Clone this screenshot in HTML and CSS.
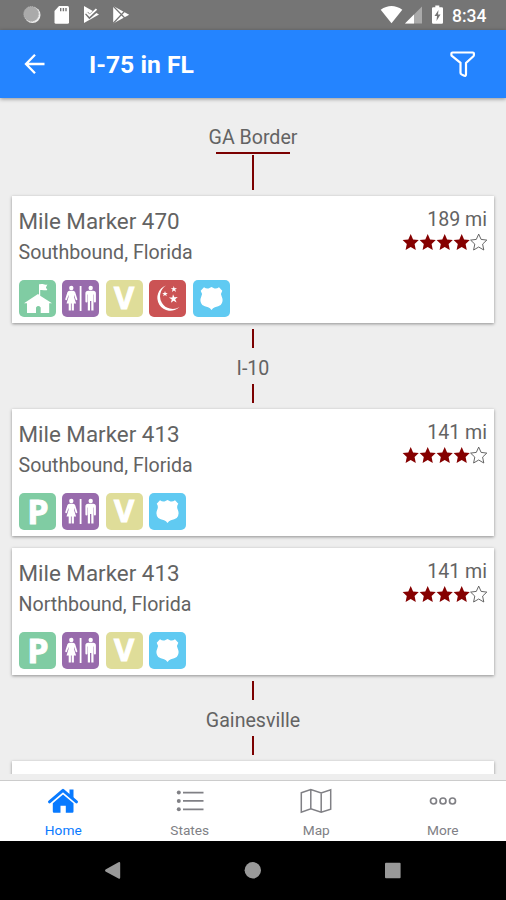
FILE: index.html
```html
<!DOCTYPE html>
<html lang="en">
<head>
<meta charset="utf-8">
<title>I-75 in FL</title>
<link rel="stylesheet" href="styles.css">
</head>
<body>
<svg class="defs" width="0" height="0">
  <symbol id="star" viewBox="0 0 17 17"><path d="M8.700 .1l2.400 5.300 5.700.7-4.200 4 1.200 5.900-5.100-3-5.100 3 1.200-5.900L.6 6.100l5.700-.7z"/></symbol>
  <symbol id="welcome" viewBox="0 0 37 37"><path d="M20 4.300h1.100c3-1 4 1.200 7.300.1l-1.500 3 1.500 2.700c-3 .9-4.300-.8-7.200 0v5.600l11.800 7.600h-2.800V33h-8.500v-5.500q-2.500-2.800-4.700 0V33H8v-9.700H5l14-9.200 1 .6z"/></symbol>
  <symbol id="restroom" viewBox="0 0 37 37"><circle cx="9.300" cy="8" r="2.200"/><path d="M7.500 10.700h3.600q1.600 0 2.100 1.600l2.100 6.700q.2 1.200-.9 1.200-.6 0-.9-1l-1.500-4.500.1 2.500 2 6.300h-2.200v7H9.700v-7h-.8v7H6.700v-7H4.500l2-6.300.1-2.500L5.100 19.200q-.3 1-.9 1-1.100 0-.9-1.200l2.100-6.700q.5-1.600 2.100-1.600zM17.700 6h1.800v25h-1.800z"/><circle cx="28.700" cy="8" r="2.200"/><path d="M26.200 10.700h5q2.700 0 2.700 2.700v8q0 1-1 1t-1-1v-7h-.4v16.100h-2.200v-9.600H28v9.600h-2.200V14.400h-.4v7q0 1-1 1t-1-1v-8q0-2.700 2.800-2.700z"/></symbol>
  <symbol id="night" viewBox="0 0 37 37"><path d="M17 5.500A13 13 0 1 0 30.500 27A11.700 11.700 0 0 1 17 5.500z"/><path d="M24 14.300l1.400 3 3.400-.2-2.600 2.200 1.400 3.300-3-1.900-2.700 2.100.9-3.400-2.900-1.900 3.400-.1zM24.700 6.100l.9 2.100 2.400-.1-1.800 1.500.8 2.300-2-1.300-2.100 1.300.7-2.300-1.900-1.500 2.400.1zM16 11l.7 1.900 2.100.1-1.600 1.200.5 2-1.700-1.100-1.800 1.100.6-2-1.600-1.300 2.100 0z"/></symbol>
  <symbol id="police" viewBox="0 0 37 37"><path d="M11 7.200q3 2 5.500.7l2-1 2 1q2.500 1.300 5.500-.7l3.300 3.600q-2 2.700-.6 5.700 2.200 4.700-1 8.500-2.200 1.600-5.800 2.300-2 .6-3.400 2.700-1.400-2.100-3.400-2.700-3.600-.7-5.800-2.300-3.200-3.800-1-8.500 1.400-3-.6-5.700z"/></symbol>
</svg>
<div class="phone">
  <div class="status">
    <svg class="status-left" width="140" height="30" viewBox="0 0 140 30">
      <circle cx="32.500" cy="15" r="8" fill="#eee"/><circle cx="31.300" cy="14" r="7.500" fill="#aaa"/><circle cx="31.300" cy="14" r="7.500" fill="none" stroke="#bbb" stroke-dasharray="1 1"/>
      <path d="M59 6h8.500q1.500 0 1.500 1.500v14.700q0 1.500-1.500 1.500H56q-1.500 0-1.500-1.500V11z" fill="#fff"/><path d="M60.700 8v3.300M63.400 8v3.300M66 8v3.300" stroke="#757575" stroke-width="1.400"/>
      <path d="M84 6l15 8.500L84 23z" fill="#fff"/><path d="M86.500 13l3 3.500 9-8" fill="none" stroke="#757575" stroke-width="3.800"/><path d="M86.500 12.600l3 3 7-6.500" fill="none" stroke="#fff" stroke-width="1.900"/>
      <path d="M113.200 6l16 8.700-16 8.700z" fill="#fff"/><path d="M113 6l11.800 12M113 23.500L124.800 11" stroke="#757575" stroke-width="1.200"/>
    </svg>
    <svg class="status-right" width="70" height="30" viewBox="380 0 70 30">
      <path d="M391.500 23.300L380.700 9.700q10.800-7.500 21.600 0z" fill="#fff"/>
      <path d="M405 23.500L422 6.500v17z" fill="#aaa"/><path d="M405 23.500l9-9v9z" fill="#fff"/>
      <path d="M435.300 5.500h4v1.800h2.500q1.200 0 1.200 1.200v14q0 1.200-1.200 1.200h-8.600q-1.200 0-1.200-1.200v-14q0-1.200 1.200-1.200h2.100z" fill="#fff"/><path d="M438.500 10l-4 6h2.500l-.5 5 4-6.500H438z" fill="#757575"/>
    </svg>
    <span class="clock">8:34</span>
  </div>
  <header class="bar">
    <svg class="back" width="22" height="22" viewBox="0 0 22 22"><path d="M20.500 11H2.500M11 1.800L2 11l9 9.200" fill="none" stroke="#fff" stroke-width="2.300"/></svg>
    <h1>I-75 in FL</h1>
    <svg class="filter" width="28" height="28" viewBox="0 0 28 28"><path d="M3.500 2.500h20.300q1.100 0 1.100 1.100v1.500q0 .6-.5 1.100l-7.400 6.800v11.200q0 2.400-2.300 1.300l-2.200-1.100q-1-.6-1-1.700v-9.900L3.200 6.200q-.8-.6-.8-1.300V3.600q0-1.100 1.100-1.100z" fill="none" stroke="#fff" stroke-width="2.200"/></svg>
  </header>
  <main class="route">
    <section class="place border"><span>GA Border</span><i class="rule"></i><i class="line long"></i></section>
    <article class="card">
      <div class="head"><div><h2>Mile Marker 470</h2><p>Southbound, Florida</p></div>
        <div class="side"><p>189 mi</p><div class="stars"><svg><use href="#star"/></svg><svg><use href="#star"/></svg><svg><use href="#star"/></svg><svg><use href="#star"/></svg><svg class="empty"><use href="#star"/></svg></div></div></div>
      <div class="tiles"><svg class="tile green"><use href="#welcome"/></svg><svg class="tile purple"><use href="#restroom"/></svg><span class="tile yellow">V</span><svg class="tile red"><use href="#night"/></svg><svg class="tile blue"><use href="#police"/></svg></div>
    </article>
    <section class="place"><i class="line"></i><span>I-10</span><i class="line"></i></section>
    <article class="card">
      <div class="head"><div><h2>Mile Marker 413</h2><p>Southbound, Florida</p></div>
        <div class="side"><p>141 mi</p><div class="stars"><svg><use href="#star"/></svg><svg><use href="#star"/></svg><svg><use href="#star"/></svg><svg><use href="#star"/></svg><svg class="empty"><use href="#star"/></svg></div></div></div>
      <div class="tiles"><span class="tile green p">P</span><svg class="tile purple"><use href="#restroom"/></svg><span class="tile yellow">V</span><svg class="tile blue"><use href="#police"/></svg></div>
    </article>
    <article class="card next">
      <div class="head"><div><h2>Mile Marker 413</h2><p>Northbound, Florida</p></div>
        <div class="side"><p>141 mi</p><div class="stars"><svg><use href="#star"/></svg><svg><use href="#star"/></svg><svg><use href="#star"/></svg><svg><use href="#star"/></svg><svg class="empty"><use href="#star"/></svg></div></div></div>
      <div class="tiles"><span class="tile green p">P</span><svg class="tile purple"><use href="#restroom"/></svg><span class="tile yellow">V</span><svg class="tile blue"><use href="#police"/></svg></div>
    </article>
    <section class="place"><i class="line"></i><span>Gainesville</span><i class="line"></i></section>
    <article class="card"></article>
  </main>
  <nav class="tabs">
    <a class="active"><svg width="32" height="28" viewBox="0 0 32 28"><path d="M2.500 14.800L16 3.400l13.500 11.400" fill="none" stroke="#087aff" stroke-width="3" stroke-linecap="round" stroke-linejoin="round"/><path d="M22.500 2.500h4v9l-4-3.400zM16 7.500l10.500 8.800v8.200q0 1.200-1.200 1.200h-6.500v-6.900h-5.300v6.900H7q-1.200 0-1.200-1.200v-8.200z" fill="#087aff"/></svg>Home</a>
    <a><svg width="32" height="28" viewBox="0 0 32 28"><g fill="#808085"><circle cx="4.800" cy="5.500" r="2"/><circle cx="4.800" cy="14" r="2"/><circle cx="4.800" cy="22.300" r="2"/><path d="M9 4.700h20.500v1.700H9zM9 13.100h20.500v1.700H9zM9 21.500h20.500v1.700H9z"/></g></svg>States</a>
    <a><svg width="32" height="28" viewBox="0 0 32 28"><path d="M1.300 5.700l9.500-3.200 10.400 3.400L30.700 2.700v19.400l-9.500 3.200-10.400-3.600-9.500 3.500zM10.800 2.500v19.200M21.200 5.900v19.400" fill="none" stroke="#808085" stroke-width="1.500"/></svg>Map</a>
    <a><svg width="32" height="28" viewBox="0 0 32 28"><g fill="none" stroke="#808085" stroke-width="1.700"><circle cx="6.500" cy="14" r="3"/><circle cx="16" cy="14" r="3"/><circle cx="25.500" cy="14" r="3"/></g></svg>More</a>
  </nav>
  <footer class="system">
    <svg width="506" height="59" viewBox="0 841 506 59"><g fill="#999"><path d="M105.500 869.500l13-7.200q1.700-.8 1.700 1v14.300q0 1.800-1.700 1l-13-7.200q-1-1 0-1.900z"/><circle cx="252.800" cy="870.300" r="8.200"/><rect x="385" y="862.700" width="15.600" height="15.600" rx="1"/></g></svg>
  </footer>
</div>
</body>
</html>
```
FILE: styles.css
```css
* { box-sizing: border-box; }
body { margin: 0; background: #eee; font-family: Roboto, "Liberation Sans", sans-serif; color: #636363; }
h1, h2, p { margin: 0; font-weight: 400; }
svg { display: block; flex: none; }
.defs { position: absolute; }
.phone { width: 506px; height: 900px; display: flex; flex-direction: column; overflow: hidden; }
.status { height: 30px; flex: none; display: flex; background: #757575; color: #fff; }
.status-right { margin-left: 240px; }
.clock { font-size: 17.500px; line-height: 32px; font-weight: 500; padding-left: 2px; }
.bar { height: 68px; flex: none; display: flex; align-items: center; background: #2484ff; color: #fff; box-shadow: 0 1px 4px rgba(0,0,0,.4); padding: 0 29px 0 24px; }
.bar h1 { font-size: 24.700px; font-weight: 700; margin-left: 43px; line-height: 30px; padding-top: 2px; }
.filter { margin-left: auto; }
.route { height: 676px; flex: none; overflow: hidden; padding: 0 12px; }
.place { height: 86px; display: flex; flex-direction: column; align-items: center; justify-content: space-between; padding: 6px 0; font-size: 19.600px; line-height: 20px; }
.place span { padding-top: 6px; }
.border { height: 98px; padding: 26px 0 6px; justify-content: flex-start; line-height: 22px; }
.border span { padding-top: 3px; }
.rule { width: 74px; height: 2px; background: #7b0000; margin-top: 3px; }
.line { width: 2.500px; height: 19px; background: #7b0000; }
.long { height: 35px; margin-top: 1px; }
.card { height: 127px; background: #fff; padding: 9px 7px 0 6.500px; box-shadow: 0 1px 3px rgba(0,0,0,.4); }
.next { margin-top: 12px; }
.head { display: flex; justify-content: space-between; height: 75px; }
.head h2 { font-size: 22.400px; line-height: 32px; }
.head p { font-size: 19.600px; line-height: 31px; }
.side { text-align: right; }
.head .side p { line-height: 29px; }
.stars { display: flex; justify-content: flex-end; }
.stars svg { width: 17px; height: 17px; fill: #850000; }
.stars .empty { fill: none; stroke: #555; stroke-width: .9; }
.tiles { display: flex; gap: 6.500px; }
.tile { width: 37px; height: 37px; border-radius: 5px; fill: #fff; color: #fff; font: 700 31px/34px "Open Sans", sans-serif; text-align: center; -webkit-text-stroke: 1px #fff; }
svg.tile { -webkit-text-stroke: 0; }
.p { font-size: 34px; line-height: 36px; padding-left: 2px; }
.green { background: #80cca3; }
.purple { background: #986bac; }
.yellow { background: #dfdd99; }
.red { background: #cb5354; }
.blue { background: #60caf2; }
.tabs { height: 67px; flex: none; display: flex; padding-top: 13px; background: linear-gradient(#eee 6px, #ccc 6px, #ccc 7px, #fff 7px); }
.tabs a { flex: 1; display: flex; flex-direction: column; align-items: center; color: #808085; font-size: 13.700px; line-height: 30px; }
.tabs .active { color: #087aff; }
.system { height: 59px; flex: none; background: #000; }
```
